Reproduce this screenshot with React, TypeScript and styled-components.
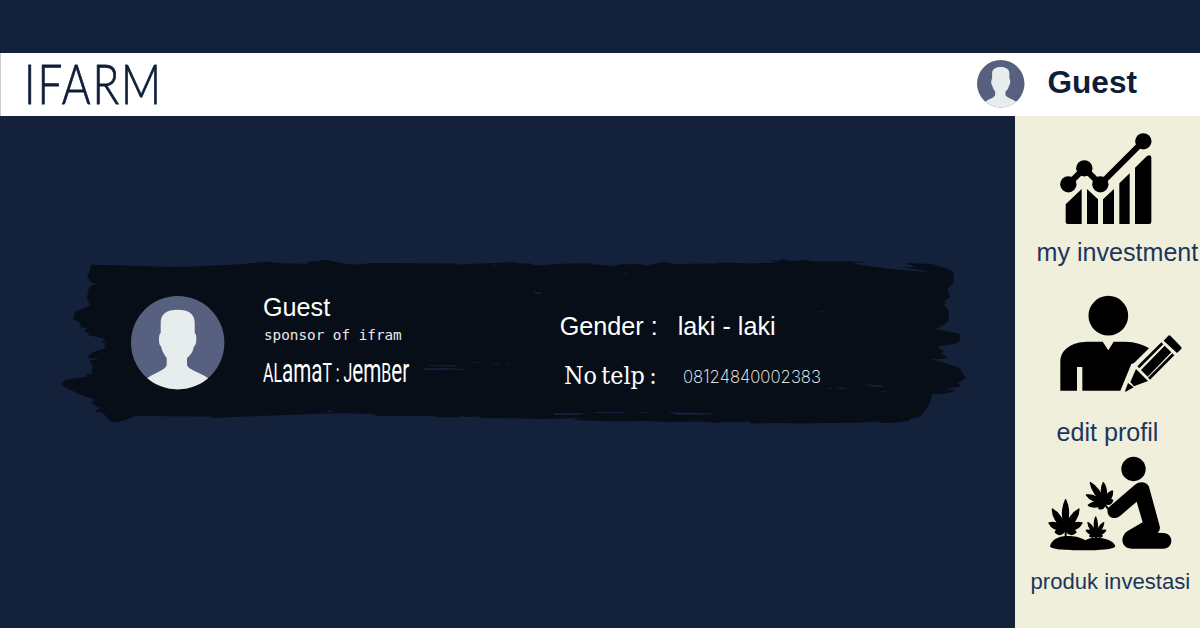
import React from "react";
import styled, { createGlobalStyle } from "styled-components";

const navy = "#14213b";
const cream = "#f0efdb";
const ink = "#070e17";

const GlobalStyle = createGlobalStyle`
  * { box-sizing: border-box; }
  body { margin: 0; background: ${navy}; font-family: "Liberation Sans", Arial, sans-serif; overflow: hidden; }
  svg { display: block; }
`;

const Page = styled.div`
  width: 1200px;
  height: 628px;
  padding-top: 53px;
  display: flex;
  flex-direction: column;
  background: ${navy};
`;

const Header = styled.header`
  height: 63px;
  flex: none;
  display: flex;
  align-items: flex-start;
  background: #fff;
  border-left: 1px solid #c9ccd3;
`;

const Logo = styled.h1`
  margin: 0 0 0 23px;
  width: 953px;
  flex: none;
  font: 300 55px/60px Lato, sans-serif;
  letter-spacing: 2.4px;
  color: #0e1e38;
  -webkit-text-stroke: 0.8px #0e1e38;
  white-space: nowrap;
  transform: scaleX(0.8);
  transform-origin: 0 0;
`;

const HeaderAvatar = styled.div`
  margin-top: 7px;
`;

const UserName = styled.div`
  margin: 11px 0 0 23px;
  font-size: 31.6px;
  line-height: 36px;
  font-weight: 700;
  color: #0e1e38;
`;

const Body = styled.div`
  flex: 1;
  display: flex;
`;

const Main = styled.main`
  width: 1015px;
  padding: 142px 0 0 60px;
`;

const Card = styled.section`
  position: relative;
  width: 908px;
  height: 168px;
  display: flex;
  color: #fff;
`;

const BrushLayer = styled.div`
  position: absolute;
  inset: 0;
`;

const CardAvatar = styled.div`
  position: relative;
  margin: 38.3px 38.3px 0 71.3px;
`;

const Info = styled.div`
  position: relative;
  width: 296.7px;
  padding-top: 34.5px;
`;

const Details = styled.div`
  position: relative;
  padding-top: 53.5px;
`;

const DetailRow = styled.div`
  display: flex;
  height: 50px;
  align-items: flex-start;
`;

const DetailName = styled.div<{ $indent?: number }>`
  width: 118px;
  padding-left: ${(p) => p.$indent ?? 0}px;
`;

const Plain = styled.div`
  font-size: 25.2px;
  line-height: 28px;
  white-space: nowrap;
`;

const Role = styled.div`
  margin: 6.5px 0 0 1px;
  font: 14.3px/16px "DejaVu Sans Mono", monospace;
  color: #e9eaec;
  white-space: nowrap;
`;

const Address = styled.div`
  margin-top: 16px;
  font: 25.5px/28px Roboto, sans-serif;
  white-space: nowrap;
  transform: scaleX(0.625);
  transform-origin: 0 0;
`;

const Small = styled.span`
  font-size: 33px;
  line-height: 0;
`;

const Slab = styled.div`
  font: 24.5px/28px "DejaVu Serif", serif;
  word-spacing: -3px;
  white-space: nowrap;
  transform: scaleX(0.91);
  transform-origin: 0 0;
`;

const Phone = styled.div`
  margin: 3px 0 0 5px;
  font: 200 18px/24px Inter, sans-serif;
  white-space: nowrap;
  transform: scaleX(0.93);
  transform-origin: 0 0;
`;

const Sidebar = styled.aside`
  width: 185px;
  background: ${cream};
  display: flex;
  flex-direction: column;
`;

const MenuItem = styled.a<{ $height: number; $top: number; $left: number }>`
  height: ${(p) => p.$height}px;
  padding: ${(p) => p.$top}px 0 0 ${(p) => p.$left}px;
  flex: none;
`;

const MenuLabel = styled.div<{ $size: number; $gap: number; $shift: number }>`
  margin: ${(p) => p.$gap}px 0 0 ${(p) => p.$shift}px;
  font-size: ${(p) => p.$size}px;
  line-height: 28px;
  color: #1b365d;
  white-space: nowrap;
`;

function Avatar({ size, id }: { size: number; id: string }) {
  return (
    <svg width={size} height={size} viewBox="244 139 280 280">
      <clipPath id={id}>
        <circle cx="384" cy="279" r="140" />
      </clipPath>
      <circle cx="384" cy="279" r="140" fill="#57617f" />
      <path
        clipPath={`url(#${id})`}
        fill="#e7eded"
        d="M384 180C351 180 333 193 333 219V250C326 253 326 287 334 290C338 308 344 315 351 325V346C349 360 325 364 290 387V420H478V387C443 364 415 360 412 346V325C424 315 429 308 433 290C442 287 442 253 435 250V219C435 193 417 180 384 180Z"
      />
    </svg>
  );
}

const brushOutline =
  "M91 264.7L121 265.5 174 267 192 266.5 225 265 240 264.2 270 261.5 273 262.7 287 263.5 307 263.7 308 261.5 319 261.5 320 260 326 260 347 264 357 264.5 373 263 454 263.5 456 264.5 507 262.5 510 262 520 263.5 531 263.5 533 265 540 265.5 556 264 593 263 588 264 615 266 619 264.5 640 264 646 265.5 658 263 664 262 675 264 715 263.5 721 262.5 749 263.5 780 262.5 768 260.5 780 260.5 783 258.5 786 260.5 796 261 803 260 815 261.5 850 261.5 870 262 853 263 860 265 880 267.5 900 270 929 272 925 270.5 901 267.5 915 266.8 905 263 932 264 948 269Q954 272 954 275V280Q953 285 947 289Q950 293 950 297L944 302 946 304 943 305Q949 309 949 313L948 322 943 325 936 329 944 331 959 333.5Q961 337 960 341L955 344 940 346 938 348 944 351 941 354 946 356 947 358.5 931 359.5 942 362 960 368 963 374 966 378 957 383 961 385 958 387 945 389 955 390 952 392 943 394H932Q931 402 925 411L919 417 911 419 908 421Q895 423 880 423L878 421.5 860 422.5 800 423.5 790 423.5 788 423 751 423.5 750 422 723 422 718 423 703 421.5 667 422 644 421 615 421.5 572 420 582 418 540 419 530 418.5 482 418 479 416.5 465 417 462 416 457 417.5 435 417 434 416 378 416 372 414 350 413.5 325 413.5 240 416.8 214 418 212 416.5 135 416 125 420Q112 425 108 419L104 414 100 412 96 412.5 95 411 101 408 94 406 97 405 91 404 94 400 92 398.5Q78 395 61 384.5L66 380Q75 378 86 377L87 374.5 94 373 91 371 93 366 90 362 91 360 101 359 88 358Q89 353 98 350.5L107 347.5 104 346 106 343 101 342 105 339 97 337 88 335 89 333 84 331 87 328 80 327 81 325 79 322 73 319 75 312 86 307 90 305 87 298 88 291Q89 285 97 283.5L90 282 89 278 87 277 90 270Z";

const brushGaps =
  "M427 365.3L458 365.2 453 366.7 430 366ZM422 368.5L446 368 471 369.5 425 370ZM457 362L460 362 459 363ZM471 362.5L485 362.3 476 363.3ZM488 363L500 363 498 364ZM505 364.3L511 364.5 506 365.2ZM491 264.8L497 265.5 496 266.8ZM533 292L542 292.5 541 294 535 293.5ZM327 410.5L333 410.5 332 411.7 327 411.5ZM619 273L623 273.6ZM624 273L630 273.5 625 274.2ZM553 413.3L585 413 581 414.5 555 415ZM595 412L625 412.2 625 413.3 597 413ZM636 412H648L646 413ZM668 412.2L714 413.5 710 414.5 678 414.7ZM819 311.5L824 311 821 312.4ZM828 314.4L835 314.4 832 315.2ZM826 388L832 388 830 389.2ZM837 387.7L846 387.7 847 388.8 838 388.7ZM864 384L880 385.5 886 387 873 386.7ZM880 391.5L887 391 885 392.5Z";

function Brush() {
  return (
    <svg width="908" height="168" viewBox="60 258 908 168">
      <path d={brushOutline} fill={ink} />
      <path d={brushGaps} fill="#14243f" />
    </svg>
  );
}

function ChartIcon() {
  return (
    <svg width="96" height="95" viewBox="144 48 288 285">
      <path d="M175 208L223 160L271 208L400 79" fill="none" stroke="#000" strokeWidth="18" />
      <circle cx="175" cy="208" r="24.5" />
      <circle cx="223" cy="160" r="24.5" />
      <circle cx="271" cy="208" r="24.5" />
      <circle cx="400" cy="79" r="24.5" />
      <path d="M167 268L215 222V327H173Q167 327 167 321ZM231 222L264 253V327H231ZM279 253L312 222V327H279ZM328 205L359 175V327H328ZM375 158L411 123Q424 116 424 128V321Q424 327 418 327H375Z" />
    </svg>
  );
}

function EditIcon() {
  return (
    <svg width="126" height="100" viewBox="144 42 378 300">
      <circle cx="295" cy="107" r="59.5" />
      <path d="M151 332V245C151 205 190 186 230 185H278L295 211L311 185H345C375 186 400 193 417 205L372 249L364 252L331 332H217V261H201V332Z" />
      <path d="M474 168Q478 164 482 168L513 200Q517 204 513 208L501 219L461 182ZM454 187L460 193L388 265L382 259ZM464 197L484 217L413 290L393 270ZM487 220L493 226L420 299L414 293ZM378 267L414 303L372 319L361 306ZM354 309L371 322L347 335Q344 335 346 331Z" />
    </svg>
  );
}

type Point = [number, number];

/* A pointed leaflet running from the leaf's heart to its tip. */
function leaflet([cx, cy]: Point, [tx, ty]: Point, spread: number) {
  const mx = cx + (tx - cx) * 0.6;
  const my = cy + (ty - cy) * 0.6;
  const len = Math.hypot(tx - cx, ty - cy);
  const nx = (-(ty - cy) / len) * spread;
  const ny = ((tx - cx) / len) * spread;
  return `M${cx} ${cy}Q${mx + nx} ${my + ny} ${tx} ${ty}Q${mx - nx} ${my - ny} ${cx} ${cy}Z`;
}

function Leaf({ heart, tips, spread }: { heart: Point; tips: Point[]; spread: number }) {
  return (
    <path
      d={tips.map((tip) => leaflet(heart, tip, spread)).join("")}
      stroke="#000"
      strokeWidth="4"
      strokeLinejoin="round"
    />
  );
}

function PlantIcon() {
  return (
    <svg width="128" height="97" viewBox="108 30 384 291">
      <circle cx="370.5" cy="72" r="36.5" />
      <path d="M380 170L398 232L354 257C328 272 332 311 367 311H460C492 311 492 264 460 264L443 263C449 258 451 250 449 243L417 125C411 110 389 107 375 119L298 185C285 198 296 222 317 219C322 218 326 216 330 213Z" />
      <path d="M120 303C124 286 145 273 170 273C195 273 212 277 226 286C240 277 255 276 268 278C295 281 314 291 316 305C310 312 270 316 220 316C165 316 120 313 120 303Z" />
      <path d="M167 250V276M258 264V280M282 175L298 196" stroke="#000" strokeWidth="6" />
      <Leaf
        heart={[166, 256]}
        tips={[[167, 164], [127, 192], [207, 192], [117, 234], [216, 234], [136, 262], [198, 262]]}
        spread={18}
      />
      <Leaf
        heart={[258, 270]}
        tips={[[257, 216], [234, 233], [281, 233], [229, 256], [287, 256], [239, 273], [277, 273]]}
        spread={9}
      />
      <Leaf
        heart={[284, 175]}
        tips={[[241, 113], [280, 113], [307, 138], [229, 150], [235, 181], [308, 166], [267, 191]]}
        spread={15}
      />
    </svg>
  );
}

export default function App() {
  return (
    <Page>
      <GlobalStyle />
      <Header>
        <Logo>IFARM</Logo>
        <HeaderAvatar>
          <Avatar size={47.5} id="header-avatar" />
        </HeaderAvatar>
        <UserName>Guest</UserName>
      </Header>
      <Body>
        <Main>
          <Card>
            <BrushLayer>
              <Brush />
            </BrushLayer>
            <CardAvatar>
              <Avatar size={93.4} id="card-avatar" />
            </CardAvatar>
            <Info>
              <Plain>Guest</Plain>
              <Role>sponsor of ifram</Role>
              <Address>
                AL<Small>ama</Small>T : J<Small>em</Small>B<Small>er</Small>
              </Address>
            </Info>
            <Details>
              <DetailRow>
                <DetailName>
                  <Plain>Gender :</Plain>
                </DetailName>
                <Plain>laki - laki</Plain>
              </DetailRow>
              <DetailRow>
                <DetailName $indent={4}>
                  <Slab>No telp :</Slab>
                </DetailName>
                <Phone>08124840002383</Phone>
              </DetailRow>
            </Details>
          </Card>
        </Main>
        <Sidebar>
          <MenuItem $height={164} $top={15} $left={43}>
            <ChartIcon />
            <MenuLabel $size={25.1} $gap={12} $shift={-21.5}>my investment</MenuLabel>
          </MenuItem>
          <MenuItem $height={171} $top={14} $left={43}>
            <EditIcon />
            <MenuLabel $size={25.1} $gap={24} $shift={-1.5}>edit profil</MenuLabel>
          </MenuItem>
          <MenuItem $height={177} $top={4} $left={31}>
            <PlantIcon />
            <MenuLabel $size={22.1} $gap={16} $shift={-15.5}>produk investasi</MenuLabel>
          </MenuItem>
        </Sidebar>
      </Body>
    </Page>
  );
}
